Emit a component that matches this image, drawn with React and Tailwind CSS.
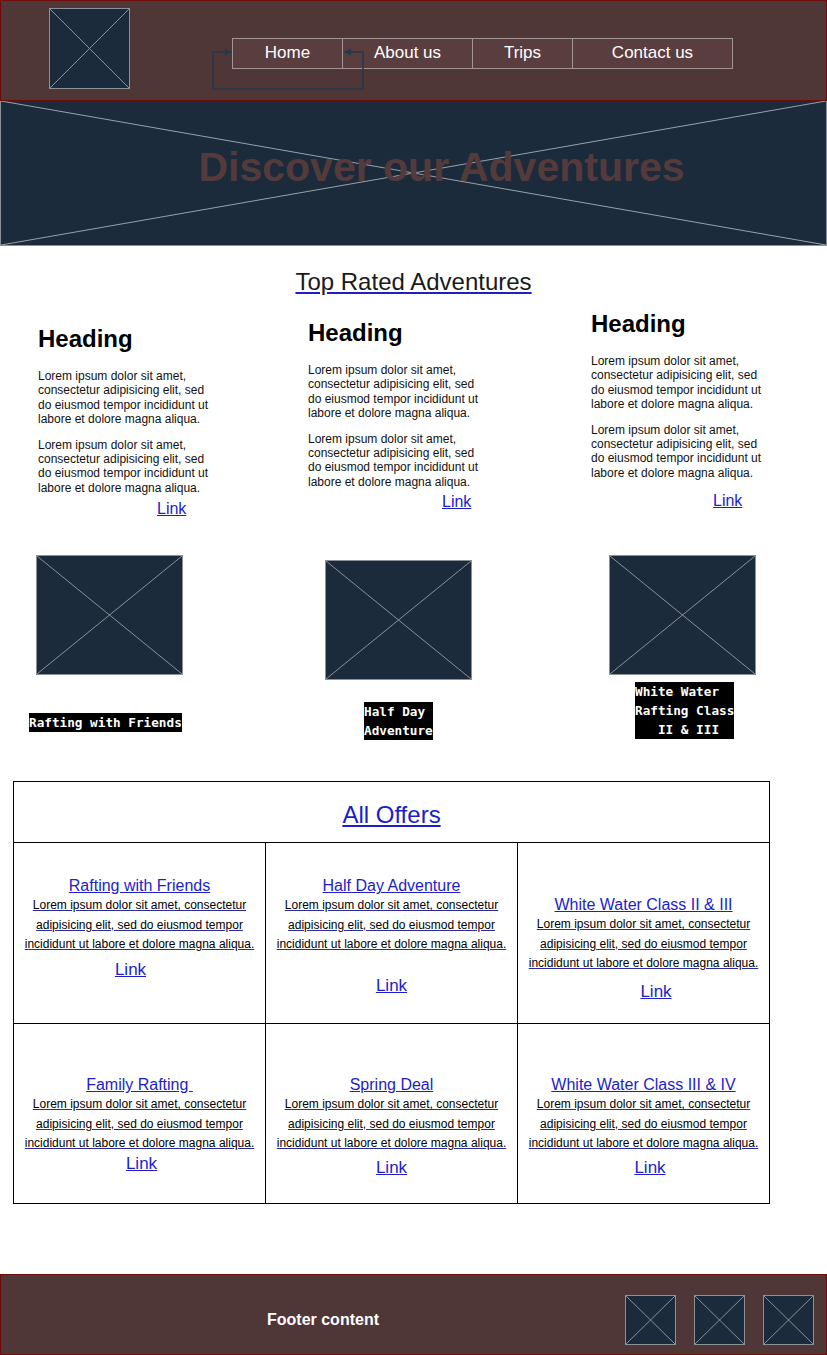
import React from "react";

function Placeholder({ className = "" }) {
  return (
    <div className={`relative bg-[#1b2b3c] border border-[#8a9197] ${className}`}>
      <svg className="absolute inset-0 w-full h-full" viewBox="0 0 100 100" preserveAspectRatio="none">
        <line x1="0" y1="0" x2="100" y2="100" stroke="#8a9197" strokeWidth="1" vectorEffect="non-scaling-stroke" />
        <line x1="100" y1="0" x2="0" y2="100" stroke="#8a9197" strokeWidth="1" vectorEffect="non-scaling-stroke" />
      </svg>
    </div>
  );
}

const navItems = [
  { label: "Home", w: "w-[109px]" },
  { label: "About us", w: "w-[130px] border-l border-[#a39595]" },
  { label: "Trips", w: "w-[100px] border-l border-[#a39595]" },
  { label: "Contact us", w: "w-[160px] border-l border-[#a39595]" },
];

const lorem = "Lorem ipsum dolor sit amet, consectetur adipisicing elit, sed do eiusmod tempor incididunt ut labore et dolore magna aliqua.";

function TopCard({ className, linkClass }) {
  return (
    <div className={className}>
      <h3 className="text-[24px] font-bold leading-[28px] text-black">Heading</h3>
      <p className="mt-[16px] w-[176px] text-[12px] leading-[14.4px] text-[#111]">{lorem}</p>
      <p className="mt-[11px] w-[176px] text-[12px] leading-[14.4px] text-[#111]">{lorem}</p>
      <a href="#" className={`block w-fit text-[16px] leading-[18px] text-[#1d1dca] underline ${linkClass}`}>Link</a>
    </div>
  );
}

const offers = [
  [
    { title: "Rafting with Friends", pad: "pt-[33px]", link: "mt-[5px] mr-[18px]" },
    { title: "Half Day Adventure", pad: "pt-[33px]", link: "mt-[21px]" },
    { title: "White Water Class II & III", pad: "pt-[52px]", link: "mt-[8px] ml-[25px]" },
  ],
  [
    { title: "Family Rafting\u00a0", pad: "pt-[51px]", link: "mt-0 ml-[4px]" },
    { title: "Spring Deal", pad: "pt-[51px]", link: "mt-[4px]" },
    { title: "White Water Class III & IV", pad: "pt-[51px]", link: "mt-[4px] ml-[13px]" },
  ],
];

function OfferCell({ item, border }) {
  return (
    <div className={`flex flex-col items-center text-center ${item.pad} ${border ? "border-l border-black" : ""}`}>
      <a href="#" className="text-[16px] leading-[20px] text-[#1d1dca] underline">{item.title}</a>
      <p className="text-[12px] leading-[19.5px] text-black underline decoration-[#2a2aa0]">
        Lorem ipsum dolor sit amet, consectetur<br />
        adipisicing elit, sed do eiusmod tempor<br />
        incididunt ut labore et dolore magna aliqua.
      </p>
      <a href="#" className={`text-[17px] leading-[20px] text-[#1d1dca] underline ${item.link}`}>Link</a>
    </div>
  );
}

export default function App() {
  return (
    <div className="w-[827px] bg-white font-['Liberation_Sans',Arial,sans-serif]">
      {/* header */}
      <header className="relative h-[101px] bg-[#4f3637] border border-[#6e0b0b]">
        <div className="flex items-start">
          <Placeholder className="ml-[48px] mt-[7px] w-[81px] h-[81px]" />
          <nav className="ml-[102px] mt-[37px] flex h-[31px] border border-[#a39595] bg-[#5a3d3e]">
            {navItems.map((n) => (
              <a key={n.label} href="#" className={`flex items-center justify-center pb-[2px] text-[17px] text-white ${n.w}`}>
                {n.label}
              </a>
            ))}
          </nav>
        </div>
        <svg className="absolute inset-0 w-full h-full pointer-events-none" width="825" height="99">
          <path d="M231 51 H212 V88 H362 V51 H344" fill="none" stroke="#25384d" strokeWidth="1.5" />
          <polygon points="231,51 224,47.5 224,54.5" fill="#25384d" />
          <polygon points="343,51 350,47.5 350,54.5" fill="#25384d" />
        </svg>
      </header>

      {/* hero */}
      <section className="relative h-[145px] bg-[#1b2b3c] border-x border-b border-[#8a9197] flex items-center justify-center pl-[56px] pb-[11px]">
        <svg className="absolute inset-0 w-full h-full" viewBox="0 0 100 100" preserveAspectRatio="none">
          <line x1="0" y1="0" x2="100" y2="100" stroke="#9aa1a7" strokeWidth="1" vectorEffect="non-scaling-stroke" />
          <line x1="100" y1="0" x2="0" y2="100" stroke="#9aa1a7" strokeWidth="1" vectorEffect="non-scaling-stroke" />
        </svg>
        <h1 className="relative text-[41px] font-bold leading-none text-[#553a3b]">Discover our Adventures</h1>
      </section>

      {/* top rated */}
      <h2 className="pt-[22px] text-center text-[24px] leading-[28px]">
        <a href="#" className="text-[#1a1a1a] underline decoration-[#2020c0]">Top Rated Adventures</a>
      </h2>

      <div className="-mt-px flex items-start">
        <TopCard className="w-[308px] pl-[38px] pt-[30px]" linkClass="mt-[5px] ml-[119px]" />
        <TopCard className="w-[283px] pt-[24px]" linkClass="mt-[4px] ml-[134px]" />
        <TopCard className="pt-[15px]" linkClass="mt-[12px] ml-[122px]" />
      </div>

      <div className="mt-[37px] flex items-start">
        <div className="ml-[36px] flex flex-col">
          <Placeholder className="w-[147px] h-[120px]" />
          <span className="mt-[38px] -ml-[7px] self-start bg-black text-white whitespace-pre font-['DejaVu_Sans_Mono',monospace] font-bold text-[12.7px] leading-[19px]">Rafting with Friends</span>
        </div>
        <div className="ml-[142px] mt-[5px] flex flex-col">
          <Placeholder className="w-[147px] h-[120px]" />
          <span className="mt-[22px] ml-[39px] self-start bg-black text-white whitespace-pre font-['DejaVu_Sans_Mono',monospace] font-bold text-[12.7px] leading-[19px]">{"Half Day \nAdventure"}</span>
        </div>
        <div className="ml-[137px] flex flex-col">
          <Placeholder className="w-[147px] h-[120px]" />
          <span className="mt-[7px] ml-[26px] self-start bg-black text-white whitespace-pre font-['DejaVu_Sans_Mono',monospace] font-bold text-[12.7px] leading-[19px]">{"White Water \nRafting Class\n   II & III"}</span>
        </div>
      </div>

      {/* all offers */}
      <div className="mt-[41px] ml-[13px] w-[757px] border border-black">
        <div className="h-[60px] flex items-center justify-center pt-[5px]">
          <a href="#" className="text-[24px] leading-[28px] text-[#1d1dca] underline">All Offers</a>
        </div>
        <div className="h-[181px] grid grid-cols-[251px_252px_252px] border-t border-black">
          {offers[0].map((o, i) => <OfferCell key={o.title} item={o} border={i > 0} />)}
        </div>
        <div className="h-[180px] grid grid-cols-[251px_252px_252px] border-t border-black">
          {offers[1].map((o, i) => <OfferCell key={o.title} item={o} border={i > 0} />)}
        </div>
      </div>

      {/* footer */}
      <footer className="mt-[70px] h-[81px] bg-[#4f3637] border border-[#6e0b0b] flex items-center pt-[10px]">
        <span className="ml-[266px] text-[16px] font-bold text-white">Footer content</span>
        <div className="ml-auto mr-[12px] flex gap-[18px]">
          <Placeholder className="w-[51px] h-[50px]" />
          <Placeholder className="w-[51px] h-[50px]" />
          <Placeholder className="w-[51px] h-[50px]" />
        </div>
      </footer>
    </div>
  );
}
